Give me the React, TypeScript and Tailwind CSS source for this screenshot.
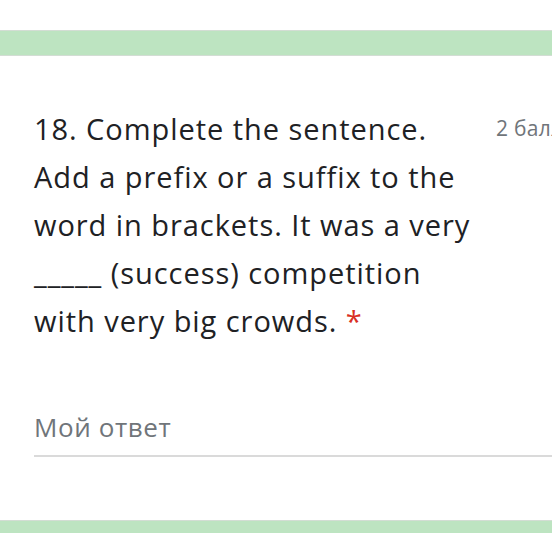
import React from 'react';

const LINES = [
  '18. Complete the sentence.',
  'Add a prefix or a suffix to the',
  'word in brackets. It was a very',
  '_____ (success) competition',
];

export default function App() {
  return (
    <div className="w-[552px] h-[534px] overflow-hidden bg-white" style={{ fontFamily: '"Open Sans", Roboto, sans-serif' }}>
      <div className="h-[30px] bg-white" />
      <div className="h-[26px] bg-[#bde4c1] border-y border-[#d3ddd4]" />
      <div className="pl-[34px] pt-[49px]">
        <div className="flex items-start">
          <div className="w-[462px] shrink-0 text-[29px] leading-[48px] text-[#202124] tracking-[0.95px]">
            {LINES.map((l) => (
              <div key={l} className="whitespace-nowrap">{l}</div>
            ))}
            <div className="whitespace-nowrap">
              with very big crowds. <span className="text-[#d93025]">*</span>
            </div>
          </div>
          <div className="shrink-0 pt-[8px] text-[21px] text-[#70757a] whitespace-nowrap tracking-[0.3px]">2 балла</div>
        </div>
        <div className="mt-[66px] text-[26px] leading-[32px] text-[#70757a] tracking-[0.6px]">Мой ответ</div>
        <div className="mt-[12px] h-[2px] bg-[#dadada]" />
      </div>
      <div className="mt-[63px] h-[13px] bg-[#bde4c1] border-t border-[#d3ddd4]" />
    </div>
  );
}
